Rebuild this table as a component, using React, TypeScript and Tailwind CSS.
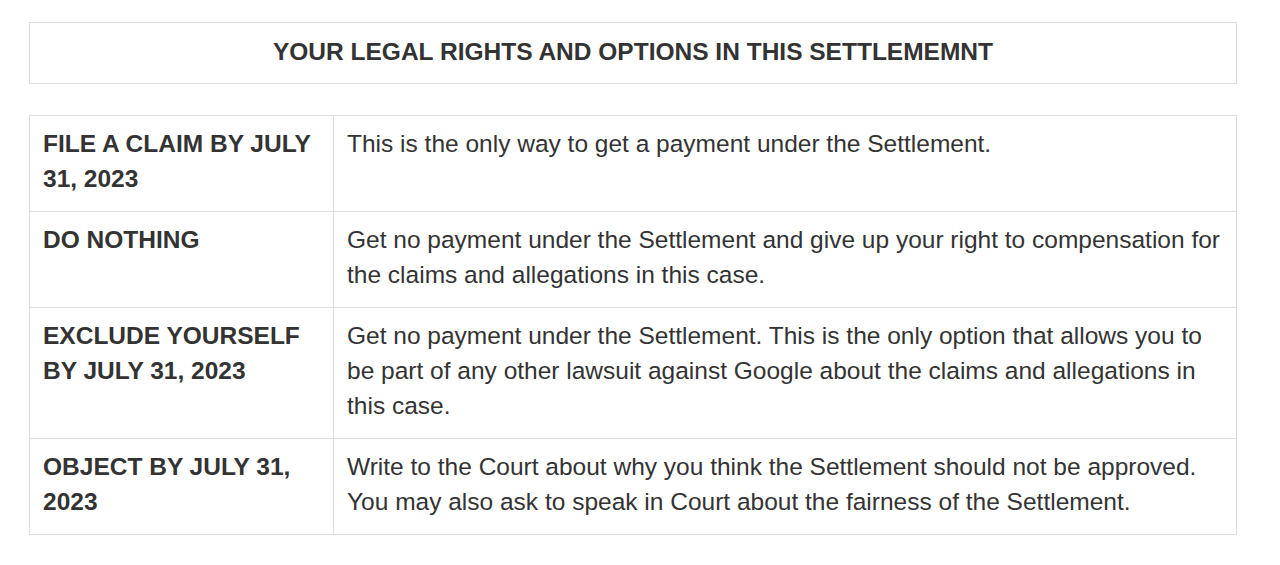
const rows = [
  {
    label: "FILE A CLAIM BY JULY 31, 2023",
    text: "This is the only way to get a payment under the Settlement.",
  },
  {
    label: "DO NOTHING",
    text: "Get no payment under the Settlement and give up your right to compensation for the claims and allegations in this case.",
  },
  {
    label: "EXCLUDE YOURSELF BY JULY 31, 2023",
    text: "Get no payment under the Settlement. This is the only option that allows you to be part of any other lawsuit against Google about the claims and allegations in this case.",
  },
  {
    label: "OBJECT BY JULY 31, 2023",
    text: "Write to the Court about why you think the Settlement should not be approved. You may also ask to speak in Court about the fairness of the Settlement.",
  },
];

export default function App() {
  return (
    <div className="min-h-[565px] bg-white pt-[22px] font-['Liberation_Sans',Arial,sans-serif] text-[#333]">
      <div className="ml-[29px] w-[1208px]">
        <div className="flex h-[62px] items-center justify-center border border-[#ddd] pb-[2px] text-[24.5px] font-bold">
          YOUR LEGAL RIGHTS AND OPTIONS IN THIS SETTLEMEMNT
        </div>

        <table className="mt-[31px] w-full table-fixed border-collapse border border-[#ddd] text-[24.5px] leading-[35px]">
          <tbody>
            {rows.map((r) => (
              <tr key={r.label}>
                <td className="w-[304px] border border-[#ddd] px-[13px] pt-[10px] pb-[15px] align-top font-bold">
                  {r.label}
                </td>
                <td className="border border-[#ddd] px-[13px] pt-[10px] pb-[15px] align-top">{r.text}</td>
              </tr>
            ))}
          </tbody>
        </table>
      </div>
    </div>
  );
}
